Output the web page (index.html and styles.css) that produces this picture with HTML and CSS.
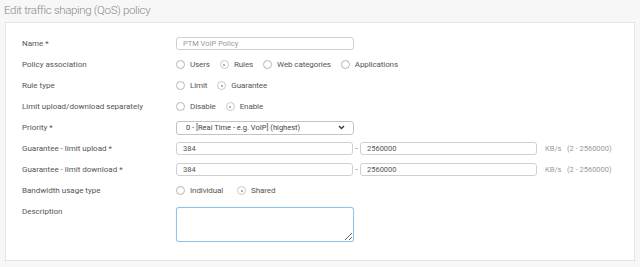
FILE: index.html
```html
<!DOCTYPE html>
<html lang="en">
<head>
  <meta charset="UTF-8" />
  <title>Edit traffic shaping (QoS) policy</title>
  <link rel="stylesheet" href="styles.css">
</head>
<body>
  <h1 class="page-title">Edit traffic shaping (QoS) policy</h1>

  <div class="panel">
    <!-- Name -->
    <div class="row">
      <label class="label">Name *</label>
      <div class="field"><input class="text muted" type="text" value="PTM VoIP Policy"></div>
    </div>

    <div class="row">
      <label class="label">Policy association</label>
      <div class="radios">
        <span class="radio"><i class="dot"></i>Users</span>
        <span class="radio"><i class="dot on"></i>Rules</span>
        <span class="radio"><i class="dot"></i>Web categories</span>
        <span class="radio"><i class="dot"></i>Applications</span>
      </div>
    </div>

    <div class="row">
      <label class="label">Rule type</label>
      <div class="radios">
        <span class="radio"><i class="dot"></i>Limit</span>
        <span class="radio"><i class="dot on"></i>Guarantee</span>
      </div>
    </div>

    <div class="row">
      <label class="label">Limit upload/download separately</label>
      <div class="radios">
        <span class="radio"><i class="dot"></i>Disable</span>
        <span class="radio"><i class="dot on"></i>Enable</span>
      </div>
    </div>

    <div class="row">
      <label class="label">Priority *</label>
      <div class="field">
        <div class="select">
          <span>0 - [Real Time - e.g. VoIP] (highest)</span>
          <svg width="7" height="5" viewBox="0 0 7 5"><path d="M1 1 L3.5 3.5 L6 1" fill="none" stroke="#333" stroke-width="1.3"/></svg>
        </div>
      </div>
    </div>

    <div class="row">
      <label class="label">Guarantee - limit upload *</label>
      <div class="range">
        <input class="text" type="text" value="384">
        <span class="dash">-</span>
        <input class="text" type="text" value="2560000">
        <span class="unit">KB/s&nbsp;&nbsp; (2 - 2560000)</span>
      </div>
    </div>

    <div class="row">
      <label class="label">Guarantee - limit download *</label>
      <div class="range">
        <input class="text" type="text" value="384">
        <span class="dash">-</span>
        <input class="text" type="text" value="2560000">
        <span class="unit">KB/s&nbsp;&nbsp; (2 - 2560000)</span>
      </div>
    </div>

    <div class="row">
      <label class="label">Bandwidth usage type</label>
      <div class="radios wide">
        <span class="radio"><i class="dot"></i>Individual</span>
        <span class="radio"><i class="dot on"></i>Shared</span>
      </div>
    </div>

    <div class="row top">
      <label class="label">Description</label>
      <div class="field"><textarea class="desc"></textarea></div>
    </div>
  </div>
</body>
</html>
```

FILE: styles.css
```css
/* Sophos-like form, light grey page */
body {
  margin: 0;
  background: #f7f7f7;
  font-family: Roboto, "Liberation Sans", sans-serif;
  color: #555;
}
.page-title {
  margin: 0;
  padding: 3px 0 0 4px;
  height: 19px;
  font-size: 11.5px;
  font-weight: 300;
  color: #8a8a8a;
  letter-spacing: -0.35px;
}
.panel {
  margin: 0 5px 0 5px;
  background: #fff;
  border: 1px solid #e4e4e4;
  box-shadow: 0 1px 1px rgba(0, 0, 0, 0.04);
  padding: 10px 0 17px 16px;
  height: 210px;
}
.row {
  display: flex;
  align-items: center;
  min-height: 21px;
  font-size: 8px;
}
.row.top {
  align-items: flex-start;
  padding-top: 6px;
}
.label {
  width: 154px;
  flex: none;
}
.field {
  width: 178px;
}
input.text {
  box-sizing: border-box;
  width: 100%;
  height: 13px;
  border: 1px solid #cfcfcf;
  border-radius: 3px;
  padding: 0 6px;
  font-family: inherit;
  font-size: 7.5px;
  color: #555;
  outline: none;
}
input.muted {
  color: #999;
}
.radios {
  display: flex;
  gap: 10px;
  letter-spacing: -0.1px;
}
.radios.wide {
  gap: 14px;
}
.radio {
  display: flex;
  align-items: center;
  color: #555;
}
.dot {
  box-sizing: border-box;
  width: 9px;
  height: 9px;
  border: 1px solid #b5b5b5;
  border-radius: 50%;
  margin-right: 5px;
  display: flex;
  align-items: center;
  justify-content: center;
}
.dot.on {
  border-color: #c8c8c8;
}
.dot.on::after {
  content: "";
  width: 2px;
  height: 2px;
  border-radius: 50%;
  background: #999;
}
.select {
  box-sizing: border-box;
  height: 14px;
  border: 1px solid #c4c4c4;
  border-radius: 3px;
  padding: 0 8px 0 9px;
  display: flex;
  align-items: center;
  justify-content: space-between;
  font-size: 7.5px;
  color: #444;
}
.range {
  display: flex;
  align-items: center;
}
.range input.text {
  width: 177px;
}
.dash {
  width: 7px;
  text-align: center;
  color: #666;
}
.unit {
  margin-left: 8px;
  color: #999;
  font-size: 7.5px;
}
textarea.desc {
  box-sizing: border-box;
  display: block;
  width: 178px;
  height: 35px;
  margin: 0;
  border: 1px solid #8ec3ea;
  border-radius: 3px;
  box-shadow: 0 0 1px #a9d3f2;
  outline: none;
  resize: vertical;
}
```
